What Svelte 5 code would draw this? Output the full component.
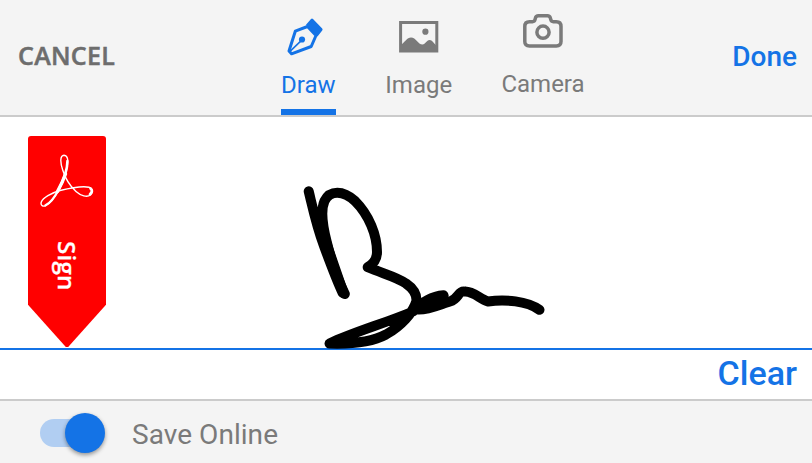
<script>
  let active = $state('Draw');
  let saveOnline = $state(true);
</script>

<main>
  <header>
    <button class="cancel">CANCEL</button>
    <nav>
      <button class="tab draw" class:active={active === 'Draw'} onclick={() => (active = 'Draw')}>
        <svg width="38" height="38" viewBox="0 0 38 38">
          <path d="M9.300 13.200 21.500 8.500 30 17.500 25.200 28.500 5.500 35.800 3 33Z" fill="none" stroke="currentColor" stroke-width="3" stroke-linejoin="round" />
          <path d="M20 6.800 25 1Q26 .1 27 1L36.200 10.600Q37 11.500 36.200 12.400L31.500 18.500Z" fill="currentColor" />
          <circle cx="16" cy="21.500" r="3.100" fill="currentColor" />
          <path d="m3.500 33.800 12.500-12" stroke="currentColor" stroke-width="1.600" />
        </svg>
        <span>Draw</span>
      </button>
      <button class="tab image" class:active={active === 'Image'} onclick={() => (active = 'Image')}>
        <svg width="40" height="32" viewBox="0 0 40 32">
          <path d="M1.600 1.600h36.200v28.300H1.600z" fill="none" stroke="currentColor" stroke-width="3" />
          <path d="M2 24C6 21 8 16.500 12 16.500c5 0 7 7 11.500 7 3 0 4-4.500 7-4.500 3.500 0 5 5 8 6.500V31H2Z" fill="currentColor" />
          <circle cx="26.400" cy="10.700" r="3.100" fill="currentColor" />
        </svg>
        <span>Image</span>
      </button>
      <button class="tab camera" class:active={active === 'Camera'} onclick={() => (active = 'Camera')}>
        <svg width="40" height="34" viewBox="0 0 40 34" fill="none" stroke="currentColor" stroke-width="3.500">
          <path d="M6.500 7.700h3q2 0 2.500-2l.4-1.600q.6-2.300 3-2.300h9q2.400 0 3 2.300l.4 1.600q.5 2 2.500 2h3q4.700 0 4.700 4.700v15.200q0 4.400-4.700 4.400H6.500q-4.700 0-4.700-4.400V12.400q0-4.700 4.700-4.700Z" />
          <circle cx="20" cy="18.200" r="6.100" />
        </svg>
        <span>Camera</span>
      </button>
    </nav>
    <button class="done">Done</button>
  </header>

  <section>
    <div class="pad">
      <div class="ribbon">
        <svg class="acrobat" width="54" height="54" viewBox="0 0 54 54" fill="none" stroke="#fff" stroke-linecap="round">
          <path d="M24 1.200C20 1.500 20 8 22.700 16C25 23.500 30 32 36 37.500C41 42 47 43.500 50.500 41C53.500 38 53 34.500 49 33.200C43 31.800 31 33.800 20 36.500C11 39 3 44 1.300 48C.2 51.500 3 53 6 51.500C14 47 23 30 26.500 17.500C28.800 9 28.500 1.500 24 1.200Z" stroke-width="1.400" />
          <path d="M27.300 7C27.300 15 23 27 18.500 36C14.500 43.500 10 49.500 5.500 51.300" stroke-width="2.300" />
          <path d="M25.500 20Q22.500 28.500 17.500 37.500" stroke-width="3.400" />
          <path d="M50.500 34.500Q53.500 37 50 40.300" stroke-width="2.700" />
        </svg>
        <span>Sign</span>
      </div>
      <svg class="signature" width="250" height="180" viewBox="300 175 250 180" fill="none" stroke="#000" stroke-width="10" stroke-linecap="round" stroke-linejoin="round">
        <path d="M308.700 191.300C313 209 316.500 226 324 246C331 265 337 281 342.500 292.500L344.800 294C338 280 331 260 327 243C322 224 321 209 324.500 201C330 190 343 190 355 201C369 215 377 235 377 252Q377 262 367.700 267.200C384 274 397 277 406 283.500Q417 291 416.500 301C413 313 401 326 386 334.500C372 342 354 344.300 329.500 343.500C354 332 383 324 413 311.500C421 302 433 296 443.500 295.200L443 297C435 302 426 306 418 309.500C429 310 441 304 450 301.500C459 299 458 290 465 291.600C474 291.500 480 299 488 301.500C505 299 527 301 539.500 309.800" />
        <path d="m418 308 25-11.500" stroke-width="11" />
        <path d="M318.500 218 328 248 343.500 293" />
      </svg>
    </div>
    <div class="actions"><button class="clear">Clear</button></div>
  </section>

  <footer>
    <button class="switch" class:on={saveOnline} aria-label="Save Online" onclick={() => (saveOnline = !saveOnline)}><i></i></button>
    <span>Save Online</span>
  </footer>
</main>

<style>
  :global(body) { margin: 0; overflow: hidden; }
  main { width: 812px; height: 463px; display: flex; flex-direction: column; background: #fff; font-family: Roboto, sans-serif; color: #7a7a7a; }
  button { appearance: none; border: 0; padding: 0; margin: 0; background: none; font: inherit; color: inherit; }
  header, footer { box-sizing: border-box; background: #f4f4f4; flex: none; display: flex; }
  header { height: 117px; border-bottom: 2px solid #cbcbcb; padding: 0 15px 0 18px; justify-content: space-between; }
  .cancel { width: 263px; padding-bottom: 5px; text-align: left; font: 600 25px "Open Sans", sans-serif; letter-spacing: .3px; -webkit-text-stroke: .5px #6d6d6d; color: #6d6d6d; }
  nav { display: flex; gap: 50px; }
  .tab { box-sizing: border-box; height: 115px; display: flex; flex-direction: column; align-items: center; font-size: 24px; line-height: 28px; border-bottom: 6px solid transparent; }
  .tab svg { display: block; flex: none; }
  .tab span { white-space: nowrap; margin-top: auto; margin-bottom: 10px; }
  .draw { width: 54.500px; padding-top: 18px; }
  .draw svg { margin-left: -6px; }
  .image { width: 66.500px; padding-top: 21px; }
  .camera { width: 82px; padding-top: 14px; }
  .camera span { margin-bottom: 11px; }
  .active { color: #1473e6; border-color: #1473e6; }
  .done { margin-left: auto; font-size: 28px; font-weight: 500; color: #1473e6; padding-bottom: 2px; }
  section { height: 282px; border-bottom: 2px solid #cbcbcb; }
  .pad { box-sizing: border-box; height: 233px; border-bottom: 2px solid #1473e6; padding: 19px 0 0 28px; position: relative; }
  .ribbon { width: 78px; height: 211px; background: #f00; border-radius: 3px 3px 0 0; clip-path: polygon(0 0, 100% 0, 100% 80%, 51.500% 100%, 48.500% 100%, 0 80%); display: flex; flex-direction: column; align-items: center; }
  .acrobat { margin-top: 18px; flex: none; }
  .ribbon span { writing-mode: vertical-rl; margin-top: 33px; font: 600 24px/30px "Open Sans", sans-serif; letter-spacing: .3px; -webkit-text-stroke: .3px #fff; color: #fff; }
  .signature { position: absolute; left: 300px; top: 58px; overflow: visible; }
  .actions { height: 49px; display: flex; justify-content: flex-end; padding-right: 15px; }
  .clear { font-size: 34px; font-weight: 500; color: #1473e6; padding-bottom: 4px; }
  footer { flex: 1; align-items: center; padding: 2px 0 0 40px; font-size: 28px; }
  .switch { position: relative; width: 65px; height: 40px; display: flex; align-items: center; flex: none; }
  .switch::before { content: ""; position: absolute; left: 0; top: 6px; width: 60px; height: 28px; border-radius: 14px; background: #ccc; }
  .switch.on::before { background: #b1cef2; }
  .switch i { position: relative; width: 40px; height: 40px; border-radius: 50%; background: #fff; box-shadow: 0 2px 4px #0006; }
  .switch.on i { margin-left: auto; background: #1473e6; }
  footer span { margin-left: 27px; padding-top: 3px; letter-spacing: .05px; }
</style>
